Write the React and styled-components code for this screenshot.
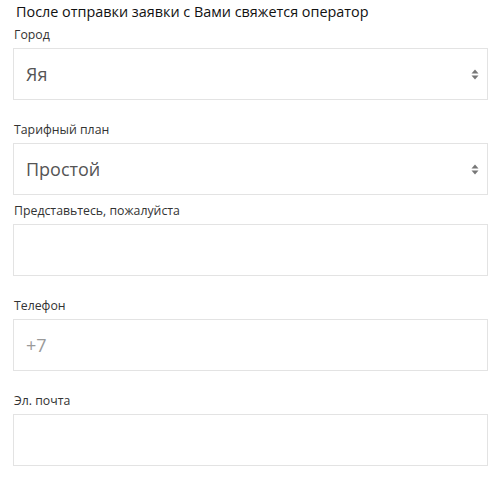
import React from "react"
import styled, { createGlobalStyle } from "styled-components"

const Global = createGlobalStyle`
  body {
    margin: 0;
    background: #fff;
    font-family: "Open Sans", "Noto Sans", sans-serif;
  }
`

const Form = styled.form`
  width: 475px;
  padding-left: 13px;
  display: flex;
  flex-direction: column;
`

const Title = styled.div`
  padding: 2px 0 0 3px;
  font-size: 14.4px;
  line-height: 20px;
  color: #111;
`

const Field = styled.div`
  display: flex;
  flex-direction: column;
  gap: 5px;
  margin-top: ${(p) => p.$gap}px;
`

const Label = styled.label`
  font-size: 12.3px;
  line-height: 16px;
  color: #333;
  padding-left: 1px;
`

const Box = styled.div`
  box-sizing: border-box;
  height: 52px;
  border: 1px solid #e3e3e3;
  display: flex;
  align-items: center;
  justify-content: space-between;
  padding: 0 8px 0 12px;
  font-size: 18px;
  color: ${(p) => (p.$muted ? "#9a9a9a" : "#555")};
`

const Arrows = () => (
  <svg width="8" height="11" viewBox="0 0 8 11">
    <path d="M4 0.5 L7.5 4.5 H0.5 Z" fill="#777" />
    <path d="M4 10.5 L7.5 6.5 H0.5 Z" fill="#777" />
  </svg>
)

const App = () => {
  return (
    <>
      <Global />
      <Form>
        <Title>После отправки заявки с Вами свяжется оператор</Title>
        <Field $gap={5}>
          <Label>Город</Label>
          <Box>
            Яя
            <Arrows />
          </Box>
        </Field>
        <Field $gap={22}>
          <Label>Тарифный план</Label>
          <Box>
            Простой
            <Arrows />
          </Box>
        </Field>
        <Field $gap={8}>
          <Label>Представьтесь, пожалуйста</Label>
          <Box />
        </Field>
        <Field $gap={22}>
          <Label>Телефон</Label>
          <Box $muted>+7</Box>
        </Field>
        <Field $gap={22}>
          <Label>Эл. почта</Label>
          <Box />
        </Field>
      </Form>
    </>
  )
}

export default App
